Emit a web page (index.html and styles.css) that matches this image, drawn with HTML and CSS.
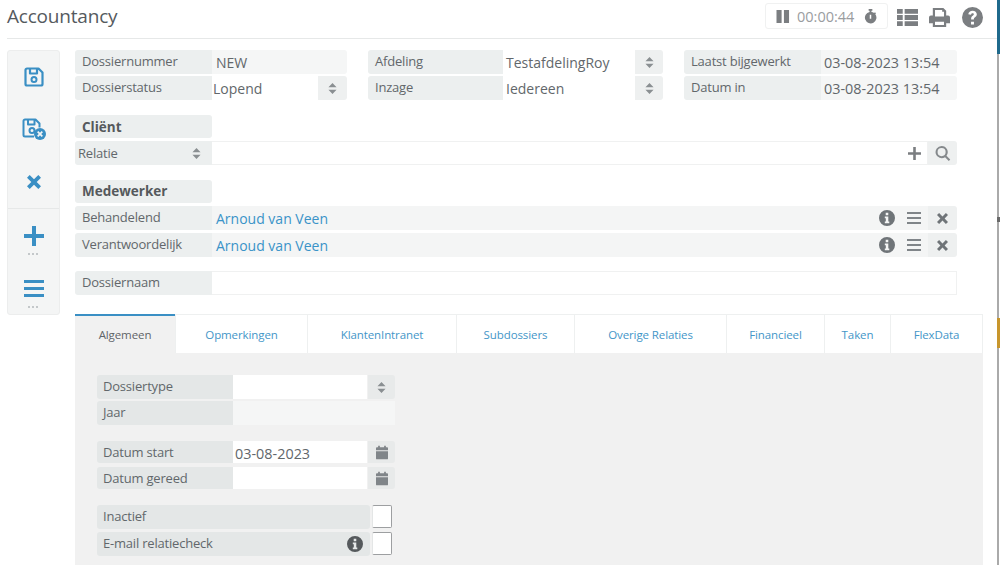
FILE: index.html
```html
<!DOCTYPE html>
<html lang="nl">
<head>
<meta charset="utf-8">
<title>Accountancy</title>
<link rel="stylesheet" href="styles.css">
</head>
<body>
<svg class="sprites" width="0" height="0" aria-hidden="true">
  <symbol id="i-updown" viewBox="0 0 10 14"><path d="M5 1 9.500 5.600H.5zM5 13 .5 8.400h9z"/></symbol>
  <symbol id="i-info" viewBox="0 0 16 16"><path fill-rule="evenodd" d="M8 0a8 8 0 1 0 0 16A8 8 0 0 0 8 0zM6.700 2.800h2.600v2.400H6.700zM5.800 6.500h3.500v5h1v1.800H5.800v-1.800h1V8.300h-1z"/></symbol>
  <symbol id="i-menu" viewBox="0 0 14 12"><path d="M0 0h14v2H0zM0 5h14v2H0zM0 10h14v2H0z"/></symbol>
  <symbol id="i-x" viewBox="0 0 12 12"><path d="M2.300 0 6 3.700 9.700 0 12 2.300 8.300 6 12 9.700 9.700 12 6 8.300 2.300 12 0 9.700 3.700 6 0 2.300z"/></symbol>
  <symbol id="i-cal" viewBox="0 0 14 16"><path d="M2.500 0h2v2h5V0h2v2H13a1 1 0 0 1 1 1v2.500H0V3a1 1 0 0 1 1-1h1.500zM0 6.500h14V15a1 1 0 0 1-1 1H1a1 1 0 0 1-1-1z"/></symbol>
</svg>
<div class="page">
  <header class="topbar">
    <h1 class="title">Accountancy</h1>
    <div class="tools">
      <div class="timer">
        <svg class="ic-pause" viewBox="0 0 14 14"><path d="M0 0h5.500v14H0zM8 0h5.500v14H8z"/></svg>
        <span>00:00:44</span>
        <svg class="ic-watch" viewBox="0 0 14 16"><path fill-rule="evenodd" d="M5 0h4v1.800H8v1.300a6 6 0 0 1 2.900 1.100l.9-.9 1.200 1.200-.9.900A6.200 6.200 0 1 1 6 3.100V1.800H5zM6.200 6v4.500h1.600V6z"/></svg>
      </div>
      <svg class="ic-list" viewBox="0 0 22 18"><path d="M0 0h6v5H0zM8 0h14v5H8zM0 6.500h6v5H0zM8 6.500h14v5H8zM0 13h6v5H0zM8 13h14v5H8z"/></svg>
      <svg class="ic-print" viewBox="0 0 22 20"><path fill-rule="evenodd" d="M4 0h11l3 3v5h2a2 2 0 0 1 2 2v6h-4v4H4v-4H0v-6a2 2 0 0 1 2-2h2zM6.300 2.200V9h9.400V4h-1.900V2.200zM6.300 14.500v3.300h9.400v-3.300z"/></svg>
      <svg class="ic-help" viewBox="0 0 20 20"><path fill-rule="evenodd" d="M10 0a10 10 0 1 0 0 20 10 10 0 0 0 0-20zM8.600 14h2.800v2.700H8.600zM6 6.800C6.300 4.700 7.900 3.500 10.100 3.500c2.300 0 4 1.400 4 3.400 0 1.600-.9 2.300-1.900 3-.7.500-.9.800-.9 1.600v.5H8.700v-.8c0-1.400.5-2.100 1.500-2.800.7-.5 1.100-.8 1.100-1.400 0-.6-.5-1-1.200-1-.8 0-1.300.5-1.500 1.300z"/></svg>
    </div>
  </header>

  <div class="main">
    <aside class="sidebar">
      <div class="side-group">
        <button class="side-btn side-save" type="button" aria-label="Opslaan">
          <svg class="ic-save" viewBox="0 0 20 20"><path fill="none" stroke="currentColor" stroke-width="2.200" stroke-linejoin="round" d="M3 1.500h11.500l4 4V17a1.500 1.500 0 0 1-1.500 1.500H3A1.500 1.500 0 0 1 1.500 17V3A1.500 1.500 0 0 1 3 1.500zM6 1.500v5h7v-5"/><circle cx="10" cy="12.500" r="2.500" fill="none" stroke="currentColor" stroke-width="2"/></svg>
        </button>
        <button class="side-btn side-saveclose" type="button" aria-label="Opslaan en sluiten">
          <svg class="ic-saveclose" viewBox="0 0 24 22"><path fill="none" stroke="currentColor" stroke-width="2" stroke-linejoin="round" d="M12 18.500H3A1.500 1.500 0 0 1 1.500 17V3A1.500 1.500 0 0 1 3 1.500h10.500l4 4v4M6 1.500v5h6.500v-5"/><circle cx="10" cy="12.500" r="2.500" fill="none" stroke="currentColor" stroke-width="2"/><circle cx="18" cy="16" r="6"/><path fill="none" stroke="#f4f5f5" stroke-width="1.800" d="m15.700 13.700 4.600 4.600M20.300 13.700l-4.600 4.600"/></svg>
        </button>
        <button class="side-btn side-close" type="button" aria-label="Sluiten">
          <svg class="ic-close"><use href="#i-x"/></svg>
        </button>
      </div>
      <div class="side-group side-group-b">
        <button class="side-btn side-plus" type="button" aria-label="Toevoegen">
          <svg class="ic-plus" viewBox="0 0 20 20"><path d="M8 0h4v8h8v4h-8v8H8v-8H0V8h8z"/></svg>
          <span class="dots"></span>
        </button>
        <button class="side-btn side-menu" type="button" aria-label="Menu">
          <svg class="ic-bigmenu" viewBox="0 0 20 17" preserveAspectRatio="none"><path d="M0 0h20v3H0zM0 7h20v3H0zM0 14h20v3H0z"/></svg>
          <span class="dots"></span>
        </button>
      </div>
    </aside>

    <div class="content">
      <section class="top-grid">
        <div class="col col-a">
          <div class="row"><label class="lab">Dossiernummer</label><div class="val val-ro">NEW</div></div>
          <div class="row"><label class="lab">Dossierstatus</label><div class="val val-input val-tight">Lopend</div><div class="addon"><svg class="ic-updown"><use href="#i-updown"/></svg></div></div>
        </div>
        <div class="col col-b">
          <div class="row"><label class="lab lab-b">Afdeling</label><div class="val val-input val-b">TestafdelingRoy</div><div class="addon addon-b"><svg class="ic-updown"><use href="#i-updown"/></svg></div></div>
          <div class="row"><label class="lab lab-b">Inzage</label><div class="val val-input val-b">Iedereen</div><div class="addon addon-b"><svg class="ic-updown"><use href="#i-updown"/></svg></div></div>
        </div>
        <div class="col col-c">
          <div class="row"><label class="lab">Laatst bijgewerkt</label><div class="val val-ro val-date">03-08-2023 13:54</div></div>
          <div class="row"><label class="lab">Datum in</label><div class="val val-ro val-date">03-08-2023 13:54</div></div>
        </div>
      </section>

      <section class="block block-client">
        <div class="heading">Cliënt</div>
        <div class="row">
          <label class="lab lab-select">Relatie<svg class="ic-updown"><use href="#i-updown"/></svg></label>
          <div class="val val-input val-outline"><svg class="ic-smallplus" viewBox="0 0 12 12"><path d="M4.800 0h2.400v4.800H12v2.400H7.200V12H4.800V7.200H0V4.800h4.800z"/></svg></div>
          <div class="addon addon-btn"><svg class="ic-search" viewBox="0 0 16 16"><path fill-rule="evenodd" d="M6.500 0a6.500 6.500 0 0 1 5.200 10.400l4 4-1.500 1.500-4-4A6.500 6.500 0 1 1 6.500 0zm0 2.200a4.300 4.300 0 1 0 0 8.600 4.300 4.300 0 0 0 0-8.600z"/></svg></div>
        </div>
      </section>

      <section class="block block-staff">
        <div class="heading">Medewerker</div>
        <div class="row">
          <label class="lab">Behandelend</label>
          <div class="val val-link"><a href="#">Arnoud van Veen</a><span class="row-icons"><svg class="ic-info"><use href="#i-info"/></svg><svg class="ic-menu"><use href="#i-menu"/></svg></span></div>
          <div class="addon addon-btn"><svg class="ic-x"><use href="#i-x"/></svg></div>
        </div>
        <div class="row">
          <label class="lab">Verantwoordelijk</label>
          <div class="val val-link"><a href="#">Arnoud van Veen</a><span class="row-icons"><svg class="ic-info"><use href="#i-info"/></svg><svg class="ic-menu"><use href="#i-menu"/></svg></span></div>
          <div class="addon addon-btn"><svg class="ic-x"><use href="#i-x"/></svg></div>
        </div>
      </section>

      <section class="block block-name">
        <div class="row"><label class="lab">Dossiernaam</label><div class="val val-input val-outline"></div></div>
      </section>

      <section class="tabset">
        <nav class="tabs">
          <a class="tab tab-active t1">Algemeen</a>
          <a class="tab t2">Opmerkingen</a>
          <a class="tab t3">KlantenIntranet</a>
          <a class="tab t4">Subdossiers</a>
          <a class="tab t5">Overige Relaties</a>
          <a class="tab t6">Financieel</a>
          <a class="tab t7">Taken</a>
          <a class="tab t8">FlexData</a>
        </nav>
        <div class="tab-body">
          <div class="form">
            <div class="row"><label class="lab">Dossiertype</label><div class="val val-input"></div><div class="addon"><svg class="ic-updown"><use href="#i-updown"/></svg></div></div>
            <div class="row"><label class="lab">Jaar</label><div class="val val-disabled"></div></div>
            <div class="gap gap-a"></div>
            <div class="row row-date"><label class="lab">Datum start</label><div class="val val-input val-datefield">03-08-2023</div><div class="addon"><svg class="ic-cal"><use href="#i-cal"/></svg></div></div>
            <div class="row row-date"><label class="lab">Datum gereed</label><div class="val val-input"></div><div class="addon"><svg class="ic-cal"><use href="#i-cal"/></svg></div></div>
            <div class="gap gap-b"></div>
            <div class="row"><label class="lab lab-wide">Inactief</label><span class="check"></span></div>
            <div class="row row-last"><label class="lab lab-wide">E-mail relatiecheck<svg class="ic-info ic-info-dark"><use href="#i-info"/></svg></label><span class="check"></span></div>
          </div>
        </div>
      </section>
    </div>
  </div>
</div>
<div class="edge" aria-hidden="true">
  <div class="edge-blue"></div>
  <div class="edge-line edge-line-a"></div>
  <div class="edge-tick"></div>
  <div class="edge-line edge-line-b"></div>
  <div class="edge-amber"></div>
  <div class="edge-line edge-line-c"></div>
</div>
</body>
</html>
```

FILE: styles.css
```css
* { box-sizing: border-box; }
html, body { margin: 0; padding: 0; height: 565px; overflow: hidden; background: #fff; }
body { display: flex; font-family: "Open Sans", "Liberation Sans", sans-serif; font-size: 14px; color: #5f6468; }
.sprites { position: absolute; }
.page { width: 997px; height: 565px; flex: none; padding-left: 7px; }
.edge { width: 3px; height: 565px; flex: none; display: flex; flex-direction: column; }
.edge-blue { height: 54px; background: #1f6a8c; }
.edge-amber { height: 30px; background: #c8962c; }
.edge-tick { height: 5px; background: #6a6a6a; }
.edge-line { border-left: 2px solid #aaaaaa; }
.edge-line-a { height: 163px; }
.edge-line-b { height: 96px; }
.edge-line-c { flex: 1; }

.topbar { height: 39px; border-bottom: 1px solid #e6e8e8; display: flex; justify-content: space-between; align-items: flex-start; }
.title { margin: 3px 0 0; font-size: 19px; letter-spacing: -.2px; font-weight: 400; line-height: 27px; color: #555a5e; }
.tools { display: flex; align-items: center; margin-top: 3px; margin-right: 14px; }
.timer { width: 123px; height: 26px; border: 1px solid #f0f1f1; border-radius: 3px; display: flex; align-items: center; padding-left: 10px; color: #9a9d9f; font-size: 14.500px; }
.ic-pause { width: 14px; height: 13px; fill: #7b7e81; margin-right: 7px; flex: none; }
.ic-watch { width: 13px; height: 15px; fill: #7b7e81; margin-left: 10px; flex: none; }
.ic-list { width: 21px; height: 19px; fill: #7b7e81; margin: 2px 0 0 9px; }
.ic-print { width: 21px; height: 21px; fill: #7b7e81; margin: 2px 0 0 11px; }
.ic-help { width: 21px; height: 21px; fill: #7b7e81; margin: 2px 0 0 12px; }

.main { display: flex; margin-top: 11px; }
.sidebar { width: 53px; height: 265px; background: #f4f5f5; border: 1px solid #eceded; border-radius: 3px; flex: none; color: #3a8fc4; fill: #3a8fc4; }
.side-group { display: flex; flex-direction: column; }
.side-group-b { border-top: 1px solid #e6e8e8; }
.side-btn { border: 0; background: none; padding: 0; margin: 0; color: inherit; fill: inherit; display: flex; flex-direction: column; align-items: center; }
.side-save { height: 52px; padding-top: 16px; }
.side-saveclose { height: 52px; padding-top: 15px; }
.side-close { height: 53px; padding-top: 20px; }
.side-plus { height: 52px; padding-top: 17px; }
.side-menu { height: 52px; padding-top: 19px; }
.ic-save { width: 20px; height: 20px; }
.ic-saveclose { width: 24px; height: 22px; }
.ic-close { width: 14px; height: 14px; }
.ic-plus { width: 20px; height: 20px; }
.ic-bigmenu { width: 20px; height: 17px; }
.dots { width: 11px; height: 2px; margin-top: 7px; background: radial-gradient(circle at 1px 1px, #c4c8ca 1px, transparent 1px) 0 0 / 4px 2px repeat-x; }
.side-menu .dots { margin-top: 9px; }

.content { width: 908px; margin-left: 15px; flex: none; }
.top-grid { display: flex; }
.col { display: flex; flex-direction: column; gap: 2px; }
.col-a { width: 272px; margin-right: 21px; }
.col-b { width: 295px; margin-right: 21px; }
.col-c { width: 273px; }
.row { display: flex; height: 24px; width: 100%; }
.lab { width: 137px; flex: none; background: #ecefef; border-radius: 3px 0 0 3px; padding: 0 0 0 7px; line-height: 22px; font-size: 13px; letter-spacing: -.2px; color: #62676b; display: flex; align-items: flex-start; white-space: nowrap; }
.lab-b { width: 135px; }
.val { flex: 1; min-width: 0; line-height: 26px; padding-left: 4px; display: flex; align-items: flex-start; white-space: nowrap; font-size: 14px; color: #62676b; }
.val-ro { background: #f5f6f6; border-radius: 0 3px 3px 0; }
.val-input { background: #fff; }
.val-tight { padding-left: 1px; }
.val-b { padding-left: 3px; }
.val-date { padding-left: 3px; font-size: 14.400px; }
.val-datefield { font-size: 14.400px; }
.addon { width: 29px; flex: none; background: #eef0f0; border-radius: 0 3px 3px 0; display: flex; align-items: center; justify-content: center; }
.addon-b { width: 28px; }
.ic-updown { width: 9px; height: 13px; fill: #8a8f92; }
.heading { width: 137px; height: 23px; background: #ecefef; border-radius: 3px; padding-left: 7px; line-height: 23px; font-size: 13.500px; font-weight: 700; color: #55595c; margin-bottom: 3px; }
.block { width: 882px; }
.block-client { margin-top: 15px; }
.block-client .heading { line-height: 24px; }
.block-client .lab { line-height: 24px; }
.block-staff { margin-top: 15px; }
.block-staff .row + .row { margin-top: 3px; }
.block-name { margin-top: 14px; }
.lab-select { justify-content: space-between; padding-left: 3px; padding-right: 11px; }
.lab-select .ic-updown { margin-top: 6px; }
.val-outline { border: 1px solid #f0f1f1; border-left: 0; justify-content: flex-end; align-items: center; padding-right: 6px; }
.ic-smallplus { width: 13px; height: 13px; fill: #7b7e81; }
.addon-btn { width: 29px; }
.ic-search { width: 16px; height: 15px; fill: #85898c; }
.val-link { background: #f4f5f5; justify-content: space-between; }
.val-link a { color: #3a93c8; text-decoration: none; }
.row-icons { display: flex; align-items: center; height: 24px; gap: 12px; padding-right: 7px; }
.ic-info { width: 16px; height: 16px; fill: #6f7478; }
.ic-menu { width: 14px; height: 12px; fill: #808589; }
.ic-x { width: 11px; height: 11px; fill: #6f7478; }

.tabset { margin-top: 19px; width: 908px; }
.tabs { display: flex; height: 39px; border-top: 1px solid #eef0f0; border-right: 1px solid #eef0f0; }
.tab { display: flex; align-items: center; justify-content: center; font-size: 11.500px; letter-spacing: -.1px; color: #4496c8; border-left: 1px solid #eef0f0; white-space: nowrap; }
.tab-active { background: #f1f1f1; color: #5f6468; border-top: 2px solid #3a8fc4; margin-top: -1px; border-left: 0; }
.t1 { width: 100px; }
.t2 { width: 132px; }
.t3 { width: 149px; }
.t4 { width: 118px; }
.t5 { width: 152px; }
.t6 { width: 98px; }
.t7 { width: 66px; }
.t8 { flex: 1; }
.tab-body { background: #f1f1f1; height: 212px; padding: 22px 0 0 22px; }
.form { width: 298px; display: flex; flex-direction: column; gap: 2px; }
.form .lab { width: 136px; padding-left: 6px; background: #e4e7e7; }
.form .val-input { padding-left: 2px; }
.form .addon { margin-left: 1px; width: 27px; background: #e8eaea; }
.val-disabled { background: #f5f6f6; }
.gap-a { height: 12px; }
.gap-b { height: 10px; }
.row-date { height: 22px; margin-bottom: 2px; }
.row-last { margin-top: 1px; }
.form .lab-wide { flex: 1; justify-content: space-between; padding-right: 7px; border-radius: 3px; margin-right: 2px; }
.ic-info-dark { margin-top: 4px; fill: #55595c; }
.ic-cal { width: 12px; height: 15px; fill: #808589; }
.check { width: 20px; height: 23px; flex: none; margin-right: 3px; background: #fff; border: 1px solid #9d9fa1; border-left-color: #e4e6e6; border-radius: 2px; }
```
